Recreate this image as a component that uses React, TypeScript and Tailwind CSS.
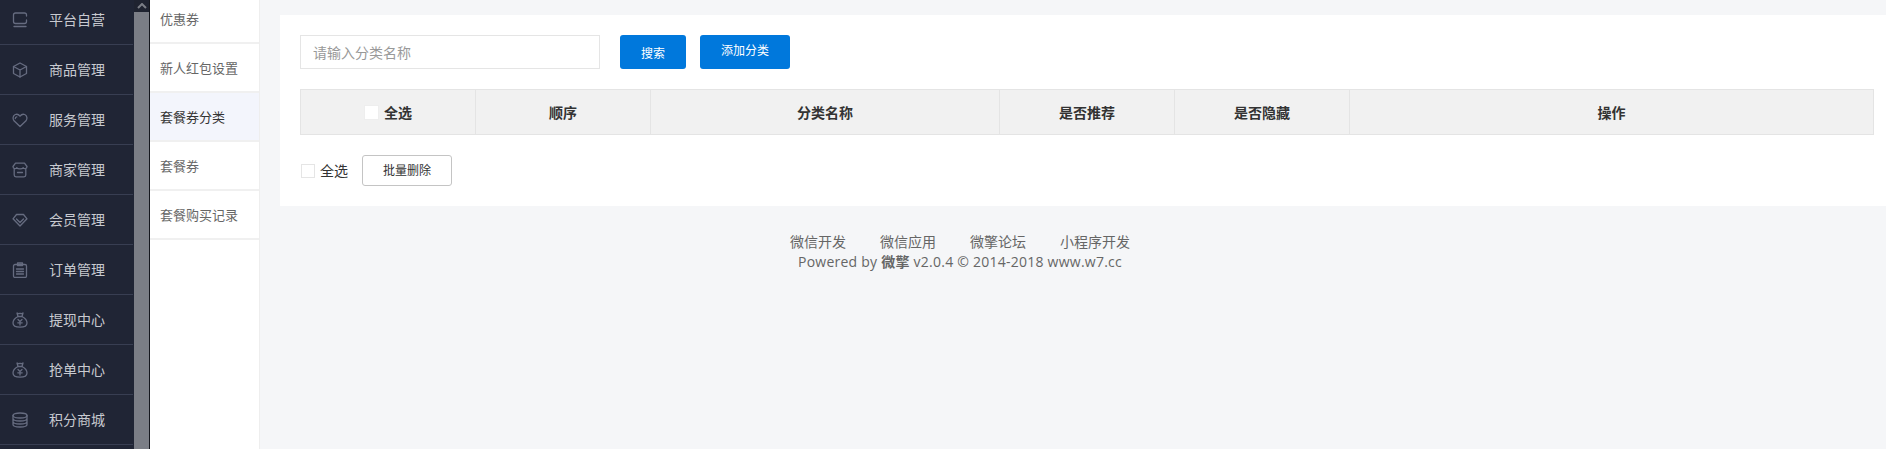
import React from "react";

const I = ({ children }: { children: React.ReactNode }) => (
  <svg viewBox="0 0 16 16" className="w-[16px] h-[16px] shrink-0" fill="none" stroke="#666c80" strokeWidth="1.3" strokeLinejoin="round" strokeLinecap="round">
    {children}
  </svg>
);

const bag = (
  <>
    <path d="M5 1 C6 1.8 7 1.8 8 1.2 C9 1.8 10 1.8 11 1 L10 4.5 H6 Z" />
    <path d="M6 4.5 C3 6 1 8.5 1 11 C1 13.8 4 15.2 8 15.2 C12 15.2 15 13.8 15 11 C15 8.5 13 6 10 4.5" />
    <path d="M6 7.5 L8 9.5 L10 7.5 M8 9.5 V13 M5.8 10.8 H10.2" />
  </>
);

const items: [string, React.ReactNode][] = [
  ["平台自营", <><path d="M14.5 4 V3 C14.5 1.8 13.8 1 12.5 1 H3.5 C2.2 1 1.5 1.8 1.5 3 V9.5 C1.5 10.7 2.2 11.5 3.5 11.5 H12.5 C13.8 11.5 14.5 10.7 14.5 9.5 V8" /><path d="M2 14.5 H14" /></>],
  ["商品管理", <><path d="M8 1 L14.5 4.5 V11.5 L8 15 L1.5 11.5 V4.5 Z" /><path d="M1.5 4.5 L8 8 L14.5 4.5 M8 8 V15" /></>],
  ["服务管理", <><path d="M8 14.5 L2 8.8 C0.4 6.8 0.8 3.6 3.3 2.5 C5.3 1.8 7 2.8 8 4.2 C9 2.8 10.7 1.8 12.7 2.5 C15.2 3.6 15.6 6.8 14 8.8 Z" /><path d="M3.3 6.5 C3.3 5.5 3.9 4.9 4.8 4.8" /></>],
  ["商家管理", <><path d="M3.5 1.2 H12.5 L15 4.5 C15 6.8 12.3 7.2 11.3 5.8 C10 7.2 6 7.2 4.7 5.8 C3.7 7.2 1 6.8 1 4.5 Z" /><path d="M2.2 7.5 V13 C2.2 14.2 2.8 14.8 4 14.8 H12 C13.2 14.8 13.8 14.2 13.8 13 V7.5 M5.5 10.5 H10.5" /></>],
  ["会员管理", <><path d="M4.5 2.5 H11.5 L15 6.8 L8 14 L1 6.8 Z" /><path d="M4.5 7 L8 10.5 L11.5 7" /></>],
  ["订单管理", <><rect x="1.5" y="2.5" width="13" height="13" rx="1.5" /><path d="M5.5 1 H10.5 V3.5 H5.5 Z M4.5 7 H11.5 M4.5 9.5 H11.5 M4.5 12 H11.5" /></>],
  ["提现中心", bag],
  ["抢单中心", bag],
  ["积分商城", <><ellipse cx="8" cy="3.5" rx="7" ry="2.5" /><path d="M1 3.5 V12.5 C1 14 4 15 8 15 C12 15 15 14 15 12.5 V3.5 M1 6.5 C1 8 4 9 8 9 C12 9 15 8 15 6.5 M1 9.5 C1 11 4 12 8 12 C12 12 15 11 15 9.5" /></>],
];

const subs = ["优惠券", "新人红包设置", "套餐券分类", "套餐券", "套餐购买记录"];
const cols: [string, boolean][] = [["顺序", true], ["分类名称", true], ["是否推荐", true], ["是否隐藏", true], ["操作", false]];
const links = ["微信开发", "微信应用", "微擎论坛", "小程序开发"];

export default function App() {
  return (
    <div className="flex h-[449px] overflow-hidden bg-[#f5f6f8] font-['Open_Sans','Noto_Sans_CJK_SC',sans-serif] text-[14px]">
      <div className="w-[133px] shrink-0 h-full overflow-hidden bg-[#202535]">
        <div className="-mt-[5px]">
          {items.map(([t, ic]) => (
            <div key={t} className="flex items-center h-[50px] border-b border-[#383e52] pl-[12px] gap-[21px] text-[#c8cad0]">
              <I>{ic}</I>
              <span>{t}</span>
            </div>
          ))}
        </div>
      </div>
      <div className="w-[17px] shrink-0 h-full flex flex-col bg-[#7b7e86] border-l border-[#202535] border-r border-r-[#16181f]">
        <div className="h-[12px] bg-[#1f2330] flex items-center justify-center">
          <svg viewBox="0 0 10 6" className="w-[10px] h-[6px]" fill="none" stroke="#7b7e86" strokeWidth="2"><path d="M1 5 L5 1 L9 5" /></svg>
        </div>
      </div>
      <div className="w-[110px] shrink-0 h-full bg-white border-r border-[#eeeeee] text-[13px] text-[#666666]">
        <div className="-mt-[5px]">
          {subs.map((s, i) => (
            <div key={s} className={`flex items-center h-[49px] pt-[2px] pl-[10px] border-b-2 border-[#f0f0f0] ${i === 2 ? "bg-[#f3f5fc] text-[#333333]" : ""}`}>
              {s}
            </div>
          ))}
        </div>
      </div>
      <div className="flex-1 min-w-0 pl-[20px]">
        <div className="mt-[15px] h-[191px] bg-white pl-[20px] pr-[12px] pt-[20px]">
          <div className="flex items-center h-[34px]">
            <input readOnly placeholder="请输入分类名称" className="w-[300px] h-full border border-[#e5e5e5] px-[12px] text-[14px] outline-none placeholder:text-[#999999]" />
            <button className="ml-[20px] w-[66px] h-full pt-[3px] rounded-[3px] bg-[#0078dc] text-white text-[12px]">搜索</button>
            <button className="ml-[14px] w-[90px] h-full pb-[3px] rounded-[3px] bg-[#0078dc] text-white text-[12px]">添加分类</button>
          </div>
          <div className="mt-[20px] grid grid-cols-[175px_175px_349px_175px_175px_1fr] h-[46px] bg-[#f1f1f1] border border-[#e4e4e4] font-bold text-[#333333]">
            <div className="flex items-center justify-center gap-[5px] border-r border-[#e4e4e4]">
              <span className="w-[15px] h-[15px] bg-white border border-[#eeeeee]" />
              全选
            </div>
            {cols.map(([c, b]) => (
              <div key={c} className={`flex items-center justify-center ${b ? "border-r border-[#e4e4e4]" : ""}`}>{c}</div>
            ))}
          </div>
          <div className="mt-[20px] flex items-center h-[31px] text-[#333333]">
            <span className="ml-[1px] w-[14px] h-[14px] border border-[#e5e5e5] bg-white" />
            <span className="ml-[5px]">全选</span>
            <button className="ml-[14px] w-[90px] h-full border border-[#c4c4c4] rounded-[3px] bg-white text-[12px]">批量删除</button>
          </div>
        </div>
        <div className="mr-[226px] -ml-[20px] mt-[26px] flex flex-col items-center text-[#666666] leading-[20px]">
          <div className="flex gap-[34px]">{links.map((l) => <span key={l}>{l}</span>)}</div>
          <div className="tracking-[0.24px]">Powered by <span className="font-bold">微擎</span> v2.0.4 © 2014-2018 www.w7.cc</div>
        </div>
      </div>
    </div>
  );
}
